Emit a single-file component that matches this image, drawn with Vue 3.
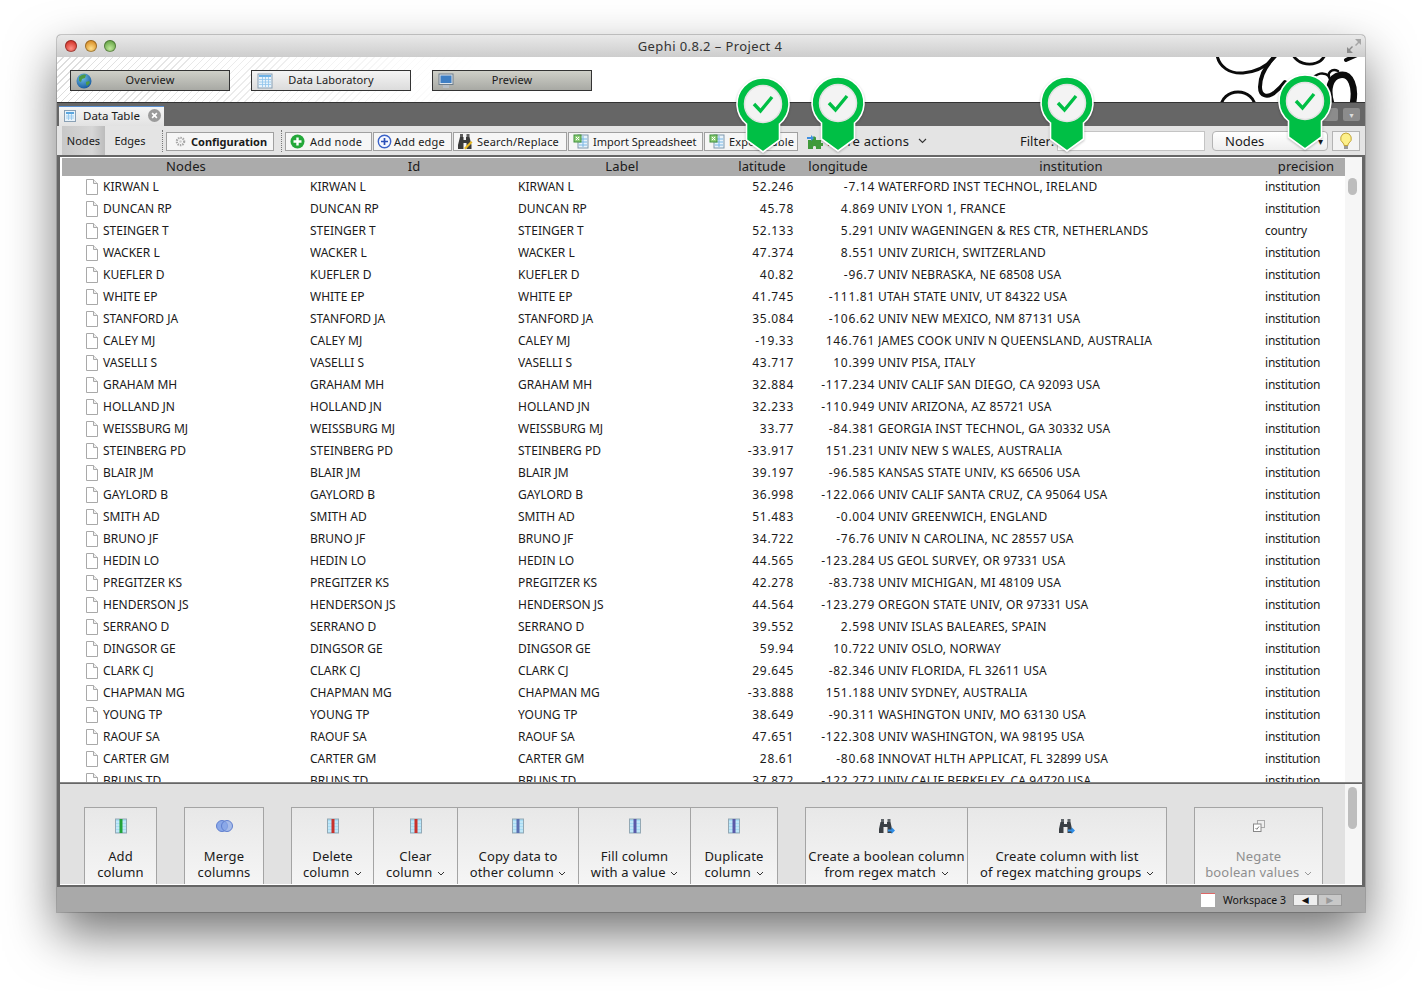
<template>
  <div class="page">
    <div class="window">
      <div class="titlebar">
        <div class="lights">
          <span class="light red"></span>
          <span class="light amber"></span>
          <span class="light green"></span>
        </div>
        <div class="title">Gephi 0.8.2 – Project 4</div>
        <svg class="fullscreen" width="16" height="16" viewBox="0 0 16 16">
          <path d="M9 1h6v6l-2-2-3 3-1-1 3-3z" fill="#a5a5a5" />
          <path d="M7 15H1V9l2 2 3-3 1 1-3 3z" fill="#8a8a8a" />
        </svg>
      </div>

      <div class="banner">
        <button class="view-btn">
          <svg class="view-icon" width="16" height="16" viewBox="0 0 16 16">
            <defs>
              <radialGradient id="globe" cx="40%" cy="30%" r="75%">
                <stop offset="0" stop-color="#6fc0e8" />
                <stop offset="1" stop-color="#14569c" />
              </radialGradient>
            </defs>
            <circle cx="8" cy="8" r="7.5" fill="url(#globe)" />
            <path d="M3 4c2-2 5-3 7-2l-1 3-3 1-1 3-2-1zM10 9l3-1 1 2-3 3-1-2z" fill="#4d9a45" />
          </svg>
          <span>Overview</span>
        </button>
        <button class="view-btn active">
          <svg class="view-icon" width="16" height="16" viewBox="0 0 16 16">
            <rect x="1" y="1" width="14" height="14" fill="#e8f3fb" stroke="#8aa0b4" />
            <rect x="2" y="2" width="12" height="2" fill="#6fb2e6" />
            <path d="M2 6.500h12M2 9h12M2 11.500h12M5.500 4v10M8.500 4v10M11.500 4v10" stroke="#8fc4ec" stroke-width=".8" />
          </svg>
          <span>Data Laboratory</span>
        </button>
        <button class="view-btn">
          <svg class="view-icon" width="16" height="16" viewBox="0 0 16 16">
            <rect x="1" y="1" width="14" height="10.500" fill="#dfe5ea" stroke="#6f7f8d" />
            <rect x="2.500" y="2.500" width="11" height="7.500" fill="#3f7fc4" />
            <rect x="5" y="12" width="6" height="3" fill="#b6bec6" />
          </svg>
          <span>Preview</span>
        </button>
        <svg class="logo" width="150" height="45" viewBox="0 0 150 45">
          <g fill="none" stroke="#0b0b0b" stroke-linecap="round">
            <path d="M7-2C9 10 20 17 33 16 47 15 58 9 66-2" stroke-width="3" />
            <path d="M66-2C56 8 50 20 50 30 50 39 57 41 64 36 68 33 72 29 75 25" stroke-width="4" />
            <ellipse cx="28" cy="50" rx="17" ry="15" stroke-width="3" />
            <path d="M83-2C87 6 98 9 106 6 110 5 113 2 115-2" stroke-width="2.800" />
            <path d="M121 46C117 32 120 20 130 18 141 16 146 30 143 46" stroke-width="6.500" />
            <path d="M120 22C116 16 122 11 128 14" stroke-width="2.500" />
            <path d="M136 3L147-2" stroke-width="4" />
            <path d="M100 24C107 15 114 15 119 19" stroke-width="2.500" />
          </g>
        </svg>
      </div>

      <div class="tabbar">
        <div class="tab">
          <svg width="12" height="12" viewBox="0 0 12 12">
            <rect x=".5" y=".5" width="11" height="11" fill="#e8f3fb" stroke="#8aa0b4" />
            <rect x="2" y="2" width="8" height="2" fill="#5aa5de" />
            <path d="M2 6h8M2 8h8M4.500 4v6M7.500 4v6" stroke="#8fc4ec" stroke-width=".8" />
          </svg>
          <span>Data Table</span>
          <svg class="tab-close" width="13" height="13" viewBox="0 0 12 12">
            <circle cx="6" cy="6" r="6" fill="#9b9b9b" />
            <path d="M3.800 3.800l4.400 4.400M8.200 3.800L3.800 8.200" stroke="#fff" stroke-width="1.500" />
          </svg>
        </div>
        <div class="tab-tools">
          <span class="tab-tool"></span>
          <span class="tab-tool">▾</span>
        </div>
      </div>

      <div class="toolbar">
        <div class="segment">
          <span class="seg-item selected">Nodes</span>
          <span class="seg-item">Edges</span>
        </div>
        <span class="dots"></span>
        <button class="config-btn">
          <svg width="11" height="11" viewBox="0 0 12 12">
            <circle cx="6" cy="6" r="4" fill="none" stroke="#a8a8a8" stroke-width="2.400" stroke-dasharray="1.600 1" />
            <circle cx="6" cy="6" r="1.400" fill="#cfcfcf" />
          </svg>
          <span>Configuration</span>
        </button>
        <span class="dots"></span>
        <div class="tool-group">
          <button class="tool w-add-node">
            <svg width="15" height="15" viewBox="0 0 15 15">
              <circle cx="7.500" cy="7.500" r="7" fill="#24a83a" />
              <path d="M7.500 3.500v8M3.500 7.500h8" stroke="#fff" stroke-width="2.400" />
            </svg>
            Add node
          </button>
          <button class="tool w-add-edge">
            <svg width="15" height="15" viewBox="0 0 15 15">
              <circle cx="7.500" cy="7.500" r="6.200" fill="#f4f7ff" stroke="#3a62c8" stroke-width="1.400" />
              <path d="M7.500 4v7M4 7.500h7" stroke="#2b4fb8" stroke-width="1.700" />
            </svg>
            Add edge
          </button>
          <button class="tool w-search">
            <svg width="15" height="17" viewBox="0 0 15 17">
              <path d="M2 4h3.500v3h2.500V4h3.500l2 8v4H8.500V10H5.500v6H0v-4z" fill="#3a3a3a" />
              <rect x="2" y="1" width="3" height="3" fill="#5f5f5f" />
              <rect x="8.500" y="1" width="3" height="3" fill="#5f5f5f" />
              <path d="M6 15l7-7 1.500 1.500-7 7z" fill="#e8b820" />
            </svg>
            Search/Replace
          </button>
          <button class="tool w-import">
            <svg width="16" height="15" viewBox="0 0 16 15">
              <rect x="5" y="1" width="10" height="13" fill="#e8f3fb" stroke="#7f98ac" />
              <path d="M6 5h8M6 8h8M6 11h8M10 2v11" stroke="#79b6e4" />
              <rect x="1" y="1" width="7" height="7" fill="#8fcf7a" stroke="#3f8f3a" />
              <path d="M3 3l3 3M6 3L3 6" stroke="#fff" />
            </svg>
            Import Spreadsheet
          </button>
          <button class="tool w-export">
            <svg width="16" height="15" viewBox="0 0 16 15">
              <rect x="5" y="1" width="10" height="13" fill="#e8f3fb" stroke="#7f98ac" />
              <path d="M6 5h8M6 8h8M6 11h8M10 2v11" stroke="#79b6e4" />
              <rect x="1" y="1" width="7" height="7" fill="#8fcf7a" stroke="#3f8f3a" />
              <path d="M3 3l3 3M6 3L3 6" stroke="#fff" />
            </svg>
            Export table
          </button>
        </div>
        <div class="more">
          <svg width="16" height="16" viewBox="0 0 16 16">
            <path d="M1 7h4V5c0-2 4-2 4 0v2h5v3h2v3h-2v3H9v-2c0-1.500-3-1.500-3 0v2H1z" fill="#3f9a3a" />
            <path d="M0 4h4V2l3 3-3 3V6H0z" fill="#3f8fe0" />
          </svg>
          <span>More actions</span>
          <svg class="chev" width="9" height="6" viewBox="0 0 9 6"><path d="M1 1l3.500 3.500L8 1" fill="none" stroke="#333" stroke-width="1.100" /></svg>
        </div>
        <div class="filter">
          <span>Filter:</span>
          <span class="filter-input"></span>
        </div>
        <div class="select">
          <span>Nodes</span>
          <span class="select-arrow">▾</span>
        </div>
        <button class="bulb">
          <svg width="14" height="18" viewBox="0 0 14 18">
            <path d="M7 1a5.500 5.500 0 0 0-3 10c.8.600 1 1.500 1 2.500h4c0-1 .2-1.900 1-2.500A5.500 5.500 0 0 0 7 1z" fill="#fdf08a" stroke="#c2a53a" />
            <rect x="5" y="14" width="4" height="3" fill="#9a9a9a" />
          </svg>
        </button>
      </div>

      <div class="table-frame">
        <div class="table">
          <div class="row head">
            <div v-for="c in columns" :key="c">{{ c }}</div>
          </div>
          <div class="rows">
            <div v-for="r in rows" :key="r[0]" class="row">
              <div class="cell name">
                <svg class="doc" width="12" height="16" viewBox="0 0 12 16">
                  <path d="M.5.500h7l4 4v11H.5z" fill="#fff" stroke="#a9a9a9" />
                  <path d="M7.500.500v4h4" fill="#eee" stroke="#a9a9a9" />
                </svg>
                {{ r[0] }}
              </div>
              <div class="cell">{{ r[0] }}</div>
              <div class="cell">{{ r[0] }}</div>
              <div class="cell lat">{{ r[1] }}</div>
              <div class="cell lng">{{ r[2] }}</div>
              <div class="cell inst">{{ r[3] }}</div>
              <div class="cell prec">{{ r[4] || 'institution' }}</div>
            </div>
          </div>
        </div>
        <div class="scroll"><span class="thumb"></span></div>
      </div>

      <div class="panel">
        <div class="actions">
          <div v-for="(group, i) in actions" :key="i" class="act-group">
            <button
              v-for="a in group"
              :key="a.l1"
              class="act"
              :class="{ disabled: a.off }"
              :style="{ width: a.w + 'px' }"
            >
              <svg v-if="a.kind === 'col'" class="act-icon" width="12" height="16" viewBox="0 0 12 16">
                <rect x=".5" y="1" width="11" height="14" fill="#a6dcf5" stroke="#93a8b4" />
                <path d="M1 4h10M1 7h10M1 10h10M1 13h10" stroke="#e8f7fd" stroke-width=".8" />
                <rect x="4.500" y="2" width="3" height="13" :fill="a.color" />
                <path d="M4 1h4L6 3z" :fill="a.color" />
              </svg>
              <svg v-else-if="a.kind === 'merge'" class="act-icon" width="17" height="14" viewBox="0 0 17 14">
                <circle cx="6" cy="7" r="5.500" fill="#8aa8e8" stroke="#5f7fcf" />
                <circle cx="11" cy="7" r="5.500" fill="#8aa8e8" fill-opacity=".7" stroke="#5f7fcf" />
              </svg>
              <svg v-else-if="a.kind === 'bino'" class="act-icon" width="16" height="16" viewBox="0 0 16 16">
                <path d="M1.500 4h3.500v2h3V4h3.500l1.500 7v4H8.500V9H4.500v6H0v-4z" fill="#3a3f44" />
                <rect x="2" y="1" width="3" height="3" fill="#5f6468" />
                <rect x="8.500" y="1" width="3" height="3" fill="#5f6468" />
                <path d="M9 11.500h3.500V9l3.500 3.500-3.500 3.500v-2.500H9z" fill="#2f8fe8" />
              </svg>
              <svg v-else class="act-icon" width="12" height="12" viewBox="0 0 12 12">
                <rect x="4.500" y=".5" width="7" height="7" fill="#eee" stroke="#aaa" />
                <rect x=".5" y="4" width="7.500" height="7.500" fill="#fff" stroke="#888" />
                <path d="M2.500 8l1.300 1.300L6 6.500" fill="none" stroke="#777" />
              </svg>
              <span class="act-line">{{ a.l1 }}</span>
              <span class="act-line">
                {{ a.l2 }}
                <svg v-if="a.menu" class="chev small" width="8" height="5" viewBox="0 0 8 5"><path d="M1 1l3 3 3-3" fill="none" :stroke="a.off ? '#999' : '#333'" /></svg>
              </span>
            </button>
          </div>
        </div>
        <div class="scroll panel-scroll"><span class="thumb"></span></div>
      </div>

      <div class="statusbar">
        <span class="ws-icon"></span>
        <span class="ws-label">Workspace 3</span>
        <div class="ws-nav">
          <span class="ws-arrow">◀</span>
          <span class="ws-arrow off">▶</span>
        </div>
      </div>

      <svg v-for="p in pins" :key="p.x" class="pin" :style="{ left: p.x + 'px', top: p.y + 'px' }" width="58" height="78" viewBox="0 0 58 78">
        <path d="M12.500 47A26 26 0 1 1 45.500 47V63L29 75 12.500 63Z" fill="#00bf45" stroke="#fff" stroke-width="1.600" />
        <circle cx="29" cy="27" r="18.500" fill="#f3f3f3" stroke="#e2e2e2" stroke-width="1.500" />
        <path d="M20 27l6.500 7L38 20" fill="none" stroke="#00bf45" stroke-width="3.400" />
      </svg>
    </div>
  </div>
</template>

<script setup>
const columns = ['Nodes', 'Id', 'Label', 'latitude', 'longitude', 'institution', 'precision']

const rows = [
  ['KIRWAN L', '52.246', '-7.14', 'WATERFORD INST TECHNOL, IRELAND'],
  ['DUNCAN RP', '45.78', '4.869', 'UNIV LYON 1, FRANCE'],
  ['STEINGER T', '52.133', '5.291', 'UNIV WAGENINGEN & RES CTR, NETHERLANDS', 'country'],
  ['WACKER L', '47.374', '8.551', 'UNIV ZURICH, SWITZERLAND'],
  ['KUEFLER D', '40.82', '-96.7', 'UNIV NEBRASKA, NE 68508 USA'],
  ['WHITE EP', '41.745', '-111.81', 'UTAH STATE UNIV, UT 84322 USA'],
  ['STANFORD JA', '35.084', '-106.62', 'UNIV NEW MEXICO, NM 87131 USA'],
  ['CALEY MJ', '-19.33', '146.761', 'JAMES COOK UNIV N QUEENSLAND, AUSTRALIA'],
  ['VASELLI S', '43.717', '10.399', 'UNIV PISA, ITALY'],
  ['GRAHAM MH', '32.884', '-117.234', 'UNIV CALIF SAN DIEGO, CA 92093 USA'],
  ['HOLLAND JN', '32.233', '-110.949', 'UNIV ARIZONA, AZ 85721 USA'],
  ['WEISSBURG MJ', '33.77', '-84.381', 'GEORGIA INST TECHNOL, GA 30332 USA'],
  ['STEINBERG PD', '-33.917', '151.231', 'UNIV NEW S WALES, AUSTRALIA'],
  ['BLAIR JM', '39.197', '-96.585', 'KANSAS STATE UNIV, KS 66506 USA'],
  ['GAYLORD B', '36.998', '-122.066', 'UNIV CALIF SANTA CRUZ, CA 95064 USA'],
  ['SMITH AD', '51.483', '-0.004', 'UNIV GREENWICH, ENGLAND'],
  ['BRUNO JF', '34.722', '-76.76', 'UNIV N CAROLINA, NC 28557 USA'],
  ['HEDIN LO', '44.565', '-123.284', 'US GEOL SURVEY, OR 97331 USA'],
  ['PREGITZER KS', '42.278', '-83.738', 'UNIV MICHIGAN, MI 48109 USA'],
  ['HENDERSON JS', '44.564', '-123.279', 'OREGON STATE UNIV, OR 97331 USA'],
  ['SERRANO D', '39.552', '2.598', 'UNIV ISLAS BALEARES, SPAIN'],
  ['DINGSOR GE', '59.94', '10.722', 'UNIV OSLO, NORWAY'],
  ['CLARK CJ', '29.645', '-82.346', 'UNIV FLORIDA, FL 32611 USA'],
  ['CHAPMAN MG', '-33.888', '151.188', 'UNIV SYDNEY, AUSTRALIA'],
  ['YOUNG TP', '38.649', '-90.311', 'WASHINGTON UNIV, MO 63130 USA'],
  ['RAOUF SA', '47.651', '-122.308', 'UNIV WASHINGTON, WA 98195 USA'],
  ['CARTER GM', '28.61', '-80.68', 'INNOVAT HLTH APPLICAT, FL 32899 USA'],
  ['BRUNS TD', '37.872', '-122.272', 'UNIV CALIF BERKELEY, CA 94720 USA'],
]

const actions = [
  [{ l1: 'Add', l2: 'column', w: 73, kind: 'col', color: '#22a33a' }],
  [{ l1: 'Merge', l2: 'columns', w: 80, kind: 'merge' }],
  [
    { l1: 'Delete', l2: 'column', w: 83, kind: 'col', color: '#c8322c', menu: true },
    { l1: 'Clear', l2: 'column', w: 84, kind: 'col', color: '#c8322c', menu: true },
    { l1: 'Copy data to', l2: 'other column', w: 121, kind: 'col', color: '#5a6fb0', menu: true },
    { l1: 'Fill column', l2: 'with a value', w: 112, kind: 'col', color: '#5a5aa8', menu: true },
    { l1: 'Duplicate', l2: 'column', w: 87, kind: 'col', color: '#5a5aa8', menu: true },
  ],
  [
    { l1: 'Create a boolean column', l2: 'from regex match', w: 163, kind: 'bino', menu: true },
    { l1: 'Create column with list', l2: 'of regex matching groups', w: 199, kind: 'bino', menu: true },
  ],
  [{ l1: 'Negate', l2: 'boolean values', w: 129, kind: 'neg', menu: true, off: true }],
]

// window-relative spots of the check marks that were laid over the shot
const pins = [
  { x: 677, y: 42 },
  { x: 752, y: 41 },
  { x: 981, y: 41 },
  { x: 1219, y: 39 },
]
</script>

<style>
html,
body {
  margin: 0;
  background: #fff;
}
</style>

<style scoped>
.page {
  box-sizing: border-box;
  width: 1422px;
  height: 991px;
  padding: 35px 57px 0;
  overflow: hidden;
  font-family: "Noto Sans", "DejaVu Sans", sans-serif;
  font-size: 12px;
  color: #1a1a1a;
  background: #fff;
}

button {
  font-family: inherit;
  color: inherit;
  padding: 0;
  margin: 0;
}

.window {
  position: relative;
  width: 1308px;
  height: 877px;
  display: flex;
  flex-direction: column;
  background: #666;
  border-radius: 4px 4px 0 0;
  box-shadow: 0 22px 50px rgba(0, 0, 0, 0.55), 0 0 0 1px rgba(0, 0, 0, 0.18);
}

.titlebar {
  height: 22px;
  flex: none;
  display: flex;
  align-items: center;
  position: relative;
  background: linear-gradient(#e9e9e9, #cdcdcd);
  border-radius: 4px 4px 0 0;
}

.lights {
  display: flex;
  gap: 7.500px;
  padding-left: 8px;
}

.light {
  width: 12px;
  height: 12px;
  border-radius: 50%;
  box-shadow: inset 0 0 0 1px rgba(0, 0, 0, 0.3);
}

.red {
  background: radial-gradient(circle at 50% 70%, #ff8f85, #d3352c 70%);
}

.amber {
  background: radial-gradient(circle at 50% 70%, #ffdf8a, #d9902a 70%);
}

.green {
  background: radial-gradient(circle at 50% 70%, #bfe89a, #6aa84a 70%);
}

.title {
  flex: 1;
  text-align: center;
  font-size: 13px;
  letter-spacing: 0.4px;
  color: #333;
  margin-right: 88px;
  margin-left: 46px;
}

.fullscreen {
  margin-right: 3px;
}

.banner {
  height: 46px;
  flex: none;
  position: relative;
  display: flex;
  gap: 21px;
  padding: 13px 0 0 13px;
  box-sizing: border-box;
  border-bottom: 1px solid #333;
  overflow: hidden;
  background:
    linear-gradient(90deg, rgba(255, 255, 255, 0) 0, #fff 420px),
    repeating-linear-gradient(135deg, #fff 0 4px, #ddd 4px 5px);
}

.view-btn {
  position: relative;
  width: 160px;
  height: 21px;
  box-sizing: border-box;
  border: 1px solid #333;
  background: linear-gradient(#cfd0c8, #a8a9a4);
  font-size: 11px;
  letter-spacing: 0.1px;
  line-height: 16px;
  padding-bottom: 2px;
  text-align: center;
}

.view-btn.active {
  background: linear-gradient(#f4f4f4, #dcdcdc);
}

.view-icon {
  position: absolute;
  left: 5px;
  top: 2px;
}

.logo {
  position: absolute;
  right: 5px;
  top: 0;
}

.tabbar {
  height: 23px;
  flex: none;
  display: flex;
  justify-content: space-between;
  align-items: flex-end;
  padding: 0 5px 0 2px;
}

.tab {
  width: 105px;
  height: 20px;
  box-sizing: border-box;
  display: flex;
  align-items: center;
  gap: 7px;
  padding: 0 0 2px 5px;
  background: linear-gradient(#f5f5f5, #e2e2e2);
  border-top: 1px solid #5a8fd0;
  font-size: 11.500px;
}

.tab-close {
  margin-left: 1px;
}

.tab-tools {
  display: flex;
  gap: 5px;
  align-self: flex-start;
  margin-top: 5px;
}

.tab-tool {
  width: 17px;
  height: 13px;
  border-radius: 2px;
  background: #8c8c8c;
  color: #ddd;
  font-size: 8px;
  line-height: 13px;
  text-align: center;
}

.toolbar {
  height: 31px;
  flex: none;
  display: flex;
  align-items: center;
  background: #e4e4e4;
  padding: 1px 0 0 5px;
  border-bottom: 2px solid #666;
  box-sizing: border-box;
}

.segment {
  display: flex;
  align-self: stretch;
  margin-top: -1px;
  font-size: 11px;
}

.seg-item {
  display: flex;
  align-items: center;
  justify-content: center;
  width: 43px;
}

.seg-item.selected {
  background: linear-gradient(90deg, #c8c8c8, #d6d6d6 70%, #bcbcbc);
}

.seg-item + .seg-item {
  width: 50px;
}

.dots {
  align-self: stretch;
  margin: 3px 3px 3px 7px;
  border-left: 1px dotted #777;
}

.config-btn {
  width: 108px;
  height: 19px;
  box-sizing: border-box;
  display: flex;
  align-items: center;
  gap: 5px;
  padding-left: 8px;
  border: 1px solid #a0a0a0;
  background: #f6f6f6;
  font-size: 11px;
  font-weight: 700;
}

.tool-group {
  display: flex;
  gap: 1px;
}

.tool {
  height: 19px;
  box-sizing: border-box;
  display: flex;
  align-items: center;
  gap: 4px;
  padding-left: 4px;
  white-space: nowrap;
  border: 1px solid #a0a0a0;
  background: #f6f6f6;
  font-size: 11px;
  letter-spacing: 0.2px;
}

.w-add-node {
  width: 87px;
  gap: 5px;
  letter-spacing: 0.3px;
}

.w-add-edge {
  width: 79px;
  gap: 2px;
  padding-left: 3px;
}

.w-search {
  width: 114px;
}

.w-import {
  width: 135px;
  letter-spacing: 0;
}

.w-export {
  width: 94px;
}

.more {
  display: flex;
  align-items: center;
  gap: 4px;
  margin-left: 9px;
  width: 214px;
  white-space: nowrap;
  font-size: 13px;
  letter-spacing: 0.25px;
}

.chev {
  margin-left: 5px;
}

.chev.small {
  margin-left: 1px;
  vertical-align: 1px;
}

.filter {
  display: flex;
  align-items: center;
  gap: 3px;
  width: 185px;
  margin-left: -1px;
  font-size: 13px;
}

.filter-input {
  flex: 1;
  height: 20px;
  box-sizing: border-box;
  border: 1px solid #c4c4c4;
  background: #fff;
}

.select {
  width: 116px;
  height: 20px;
  box-sizing: border-box;
  margin-left: 7px;
  display: flex;
  align-items: center;
  justify-content: space-between;
  padding: 0 4px 0 12px;
  border: 1px solid #b4b4b4;
  border-radius: 4px;
  background: linear-gradient(#fff, #eee);
  font-size: 13px;
}

.select-arrow {
  font-size: 10px;
}

.bulb {
  width: 28px;
  height: 20px;
  box-sizing: border-box;
  margin-left: 4px;
  border: 1px solid #b4b4b4;
  background: #f4f4f4;
  display: flex;
  align-items: center;
  justify-content: center;
}

.table-frame {
  flex: none;
  height: 626px;
  margin: 0 3px;
  display: flex;
  background: #fff;
  overflow: hidden;
  border-bottom: 1px solid #888;
  box-sizing: border-box;
}

.table {
  width: 1283px;
  margin: 1px 0 0 2px;
  flex: none;
  overflow: hidden;
}

.row {
  display: grid;
  grid-template-columns: 248px 208px 208px 72px 80px 386px 81px;
  height: 22px;
  line-height: 22px;
  white-space: nowrap;
}

.row.head {
  height: 18px;
  line-height: 17px;
  background: #ababab;
  font-size: 13px;
  letter-spacing: 0.1px;
  text-align: center;
}

.row.head div:last-child {
  padding-left: 3px;
}

.cell {
  overflow: hidden;
}

.name {
  display: flex;
  align-items: center;
  gap: 5px;
  padding-left: 24px;
}

.doc {
  flex: none;
}

.lat,
.lng {
  text-align: right;
  letter-spacing: 0.7px;
}

.lat {
  padding-right: 4px;
}

.lng {
  padding-right: 3px;
}

.inst {
  letter-spacing: 0.18px;
}

.prec {
  padding-left: 1px;
  letter-spacing: -0.2px;
}

.scroll {
  flex: 1;
  background: #f6f6f6;
  padding: 21px 0 0 3px;
}

.thumb {
  display: block;
  width: 9px;
  height: 17px;
  border-radius: 5px;
  background: #bdbdbd;
}

.panel {
  flex: none;
  height: 101px;
  margin: 1px 3px 0;
  display: flex;
  background: #e1e1e1;
  border-bottom: 1px solid #fff;
  box-sizing: border-box;
}

.actions {
  flex: none;
  width: 1283px;
  margin-left: 2px;
  display: flex;
  gap: 27px;
  align-items: flex-end;
  padding-left: 22px;
  box-sizing: border-box;
}

.act-group {
  display: flex;
}

.act {
  height: 77px;
  box-sizing: border-box;
  display: flex;
  flex-direction: column;
  align-items: center;
  border: 1px solid #a4a4a4;
  border-bottom: 0;
  background: linear-gradient(#e8e8e8, #f5f5f5);
  font-size: 13px;
  letter-spacing: 0.15px;
  line-height: 16px;
  white-space: nowrap;
  padding-top: 10px;
}

.act + .act {
  border-left: 0;
}

.act.disabled {
  color: #8f8f8f;
}

.act-icon {
  height: 16px;
  margin-bottom: 14px;
}

.panel-scroll {
  padding-top: 3px;
}

.panel-scroll .thumb {
  height: 42px;
}

.statusbar {
  flex: 1;
  display: flex;
  align-items: center;
  justify-content: flex-end;
  margin-top: 2px;
  padding-right: 23px;
  background: #a9a9a9;
  font-size: 10.500px;
  color: #111;
}

.ws-icon {
  width: 14px;
  height: 13px;
  background: #fff;
  border-top: 1px solid #d66;
  margin-right: 8px;
}

.ws-label {
  margin-right: 7px;
}

.ws-nav {
  display: flex;
  width: 49px;
  height: 12px;
}

.ws-arrow {
  flex: 1;
  background: #eee;
  border: 1px solid #999;
  font-size: 9px;
  line-height: 10px;
  text-align: center;
}

.ws-arrow.off {
  background: #c8c8c8;
  color: #999;
}

.pin {
  position: absolute;
  filter: drop-shadow(0 1px 1px rgba(0, 0, 0, 0.25));
}
</style>
